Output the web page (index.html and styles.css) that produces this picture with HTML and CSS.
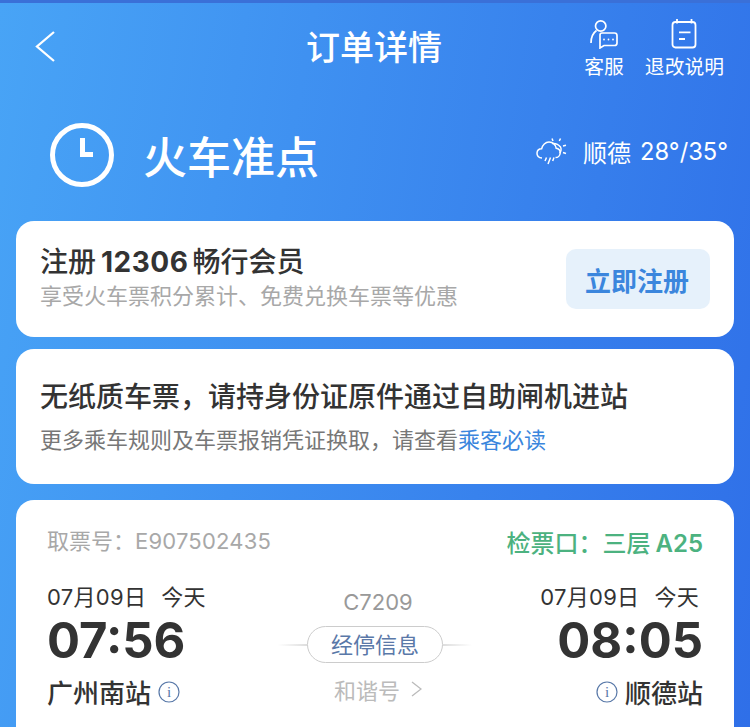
FILE: index.html
```html
<!DOCTYPE html>
<html lang="zh-CN">
<head>
<meta charset="utf-8">
<title>订单详情</title>
<link rel="stylesheet" href="styles.css">
</head>
<body>
<div class="page">
  <header class="nav">
    <svg class="back" width="24" height="34" viewBox="0 0 24 34"><path d="M21 2 L4 16.5 L21 31" fill="none" stroke="#fff" stroke-width="2.3"/></svg>
    <h1 class="nav-title">订单详情</h1>
    <div class="nav-actions">
      <div class="nav-action">
        <svg width="30" height="30" viewBox="0 0 30 30" fill="none" stroke="#fff" stroke-width="1.7">
          <circle cx="11.7" cy="7" r="5.2"/>
          <path d="M7.5 11.5 C4 14 2 19 2 24"/>
          <path d="M13 14 H25.5 Q28 14 28 16.5 V24 Q28 26.5 25.5 26.5 H15 L11 29 V16 Q11 14 13 14 Z"/>
          <circle cx="15" cy="20.5" r="0.9" fill="#fff" stroke="none"/><circle cx="19.5" cy="20.5" r="0.9" fill="#fff" stroke="none"/><circle cx="24" cy="20.5" r="0.9" fill="#fff" stroke="none"/>
        </svg>
        <span>客服</span>
      </div>
      <div class="nav-action">
        <svg width="30" height="30" viewBox="0 0 30 30" fill="none" stroke="#fff" stroke-width="1.8">
          <rect x="3.5" y="3" width="23" height="25.5" rx="3"/>
          <path d="M8 0 V4.5 M22.5 0 V4.5"/>
          <path d="M10 13.3 H21.5 M10 20 H16"/>
        </svg>
        <span>退改说明</span>
      </div>
    </div>
  </header>

  <section class="status">
    <svg class="clock" width="64" height="64" viewBox="0 0 64 64" fill="none" stroke="#fff">
      <circle cx="32" cy="32" r="29.5" stroke-width="5"/>
      <path d="M32.5 15 V31.5 H43" stroke-width="5"/>
    </svg>
    <div class="status-text">火车准点</div>
    <div class="weather">
      <svg width="31" height="28" viewBox="0 0 31 28" fill="none" stroke="#fff" stroke-width="1.5">
        <path d="M6 21 C2.5 21 0.8 18.6 1 16 C1.2 13.5 3.2 11.8 5.6 11.8 C6.4 8 9.5 5 13 5 C17 5 19.8 8 20.2 11.2 C22.8 11.4 24.4 13.6 24.2 16 C24 18.6 22 20.6 19.5 20.6"/>
        <path d="M16 6.5 C18 6.2 22 6.8 24.5 10 C25.6 12 25 15 23.6 16"/>
        <path d="M10.5 20.5 L9 24 M14.5 20.5 L12 27 M18 20.5 L16.7 24"/>
        <path d="M16 1.5 L17 4 M24.5 1.5 L23.3 4 M27 9 L30 8.2 M27 15.5 L30 16.5"/>
      </svg>
      <span class="weather-city">顺德</span>
      <span class="weather-temp">28°/35°</span>
    </div>
  </section>

  <main class="cards">
    <section class="card card-member">
      <div class="member-text">
        <div class="member-title">注册<span class="num">12306</span>畅行会员</div>
        <div class="member-sub">享受火车票积分累计、免费兑换车票等优惠</div>
      </div>
      <button class="member-btn">立即注册</button>
    </section>

    <section class="card card-notice">
      <div class="notice-title">无纸质车票，请持身份证原件通过自助闸机进站</div>
      <div class="notice-sub">更多乘车规则及车票报销凭证换取，请查看<span class="link">乘客必读</span></div>
    </section>

    <section class="card card-ticket">
      <div class="ticket-head">
        <div class="ticket-code">取票号：<span class="code-num">E907502435</span></div>
        <div class="ticket-gate">检票口：三层<span class="gate-num">A25</span></div>
      </div>
      <div class="ticket-body">
        <div class="stop">
          <div class="stop-date"><span>07月09日</span><span>今天</span></div>
          <div class="stop-time">07:56</div>
          <div class="stop-name">广州南站
            <svg class="info" width="22" height="22" viewBox="0 0 22 22"><circle cx="11" cy="11" r="10" fill="none" stroke="#5878a8" stroke-width="1.2"/><text x="11" y="16" text-anchor="middle" class="info-i">i</text></svg>
          </div>
        </div>
        <div class="mid">
          <div class="train-no">C7209</div>
          <div class="via-row">
            <span class="line line-l"></span>
            <span class="via">经停信息</span>
            <span class="line line-r"></span>
          </div>
          <div class="train-type">和谐号
            <svg width="11" height="16" viewBox="0 0 11 16"><path d="M1 1 L10 8 L1 15" fill="none" stroke="#bbb" stroke-width="1.3"/></svg>
          </div>
        </div>
        <div class="stop stop-right">
          <div class="stop-date"><span>07月09日</span><span>今天</span></div>
          <div class="stop-time">08:05</div>
          <div class="stop-name">
            <svg class="info" width="22" height="22" viewBox="0 0 22 22"><circle cx="11" cy="11" r="10" fill="none" stroke="#5878a8" stroke-width="1.2"/><text x="11" y="16" text-anchor="middle" class="info-i">i</text></svg>
            顺德站</div>
        </div>
      </div>
    </section>
  </main>
</div>
</body>
</html>
```
FILE: styles.css
```css
* { box-sizing: border-box; margin: 0; padding: 0; }
html, body { width: 750px; height: 727px; overflow: hidden; }
body { font-family: Inter, "Noto Sans CJK SC", sans-serif; color: #333; }
.page {
  width: 750px; height: 727px; overflow: hidden;
  background: linear-gradient(100deg, #48a4f6 0%, #2f6fe8 100%);
  border-top: 3px solid #3a70d8;
  color: #fff;
}
.nav { display: flex; align-items: flex-start; height: 88px; padding: 0 26px 0 33px; position: relative; }
.back { margin-top: 27px; }
.nav-title {
  position: absolute; left: 306px; top: 19px;
  font-size: 34px; font-weight: 500; line-height: 48px;
  font-family: "Noto Sans CJK SC", sans-serif;
}
.nav-actions { margin-left: auto; display: flex; gap: 21px; padding-top: 16px; }
.nav-action { display: flex; flex-direction: column; align-items: center; font-size: 19.8px; line-height: 26px; font-family: "Noto Sans CJK SC", sans-serif; gap: 4px; }
.status { display: flex; align-items: center; height: 130px; padding: 0 22px 0 50px; }
.clock { margin-top: -3px; }
.status-text { font-size: 44px; margin-left: 29px; font-weight: 500; font-family: "Noto Sans CJK SC", sans-serif; line-height: 60px; margin-top: -2px; }
.weather { margin-left: auto; display: flex; align-items: center; font-size: 23.7px; margin-top: -10px; }
.weather-city { margin-left: 16px; font-size: 24px; font-family: "Noto Sans CJK SC", sans-serif; }
.weather-temp { margin-left: 9px; }
.cards { display: flex; flex-direction: column; padding: 0 16px; gap: 12px; }
.card { background: #fff; border-radius: 18px; color: #333; }
.card-member { height: 116px; display: flex; align-items: flex-start; justify-content: space-between; padding: 20px 24px 0 24px; }
.member-title { font-size: 28px; line-height: 38px; font-weight: 500; font-family: "Noto Sans CJK SC", sans-serif; }
.num { font-family: Inter, sans-serif; font-weight: 700; margin: 0 4px 0 5px; letter-spacing: 0.5px; }
.member-sub { font-size: 22px; line-height: 30px; color: #a8a8a8; font-family: "Noto Sans CJK SC", sans-serif; margin-top: -2px; }
.member-btn {
  width: 144px; height: 60px; margin-top: 8px; padding: 0 2px 0 0; border: 0; border-radius: 10px;
  background: #e6f1fb; color: #3b86dd; font-size: 26px; font-weight: 700;
  font-family: "Noto Sans CJK SC", sans-serif;
}
.card-notice { height: 135px; padding: 26px 24px 0; font-family: "Noto Sans CJK SC", sans-serif; margin-bottom: 4px; }
.notice-title { font-size: 28px; line-height: 40px; font-weight: 500; }
.notice-sub { font-size: 22px; line-height: 30px; color: #777; margin-top: 8px; }
.link { color: #3b86dd; }
.card-ticket { height: 300px; padding: 22px 31px 0 31px; }
.ticket-head { display: flex; justify-content: space-between; align-items: center; height: 38px; }
.ticket-code { font-size: 22px; color: #a8a8a8; margin-bottom: 4px; font-family: Inter, "Noto Sans CJK SC", sans-serif; }
.code-num { letter-spacing: 0.2px; }
.ticket-gate { font-size: 24px; color: #4cb280; font-weight: 500; font-family: "Noto Sans CJK SC", sans-serif; }
.gate-num { font-family: Inter, sans-serif; font-weight: 600; margin-left: 5px; }
.ticket-body { display: flex; justify-content: space-between; margin-top: 22px; }
.stop { display: flex; flex-direction: column; align-items: flex-start; width: 200px; }
.stop-right { align-items: flex-end; }
.stop-date { display: flex; gap: 15px; font-size: 22px; line-height: 30px; color: #333; letter-spacing: 0.3px; }
.stop-right .stop-date { margin-right: 4px; }
.stop-time { font-size: 49px; font-weight: 700; line-height: 58px; margin-top: 0; }
.stop-name { display: flex; align-items: center; gap: 7px; font-size: 26px; line-height: 36px; margin-top: 4px; font-family: "Noto Sans CJK SC", sans-serif; font-weight: 500; }
.info-i { font-family: "Liberation Serif", serif; font-size: 15px; fill: #5878a8; }
.mid { display: flex; flex-direction: column; align-items: center; padding-top: 6px; }
.train-no { font-size: 22px; line-height: 28px; color: #999; margin-left: 6px; }
.via-row { display: flex; align-items: center; margin-top: 10px; }
.line { width: 29px; height: 2px; }
.line-l { background: linear-gradient(90deg, #fff, #ddd); }
.line-r { background: linear-gradient(90deg, #ddd, #fff); }
.via {
  width: 136px; height: 37px; padding-bottom: 3px; border: 1px solid #ccc; border-radius: 19px;
  display: flex; align-items: center; justify-content: center;
  font-size: 22px; color: #5a78a8; font-family: "Noto Sans CJK SC", sans-serif;
}
.train-type { display: flex; align-items: center; gap: 11px; font-size: 22px; line-height: 30px; color: #bbb; margin: 11px 0 0 6px; font-family: "Noto Sans CJK SC", sans-serif; }
```
